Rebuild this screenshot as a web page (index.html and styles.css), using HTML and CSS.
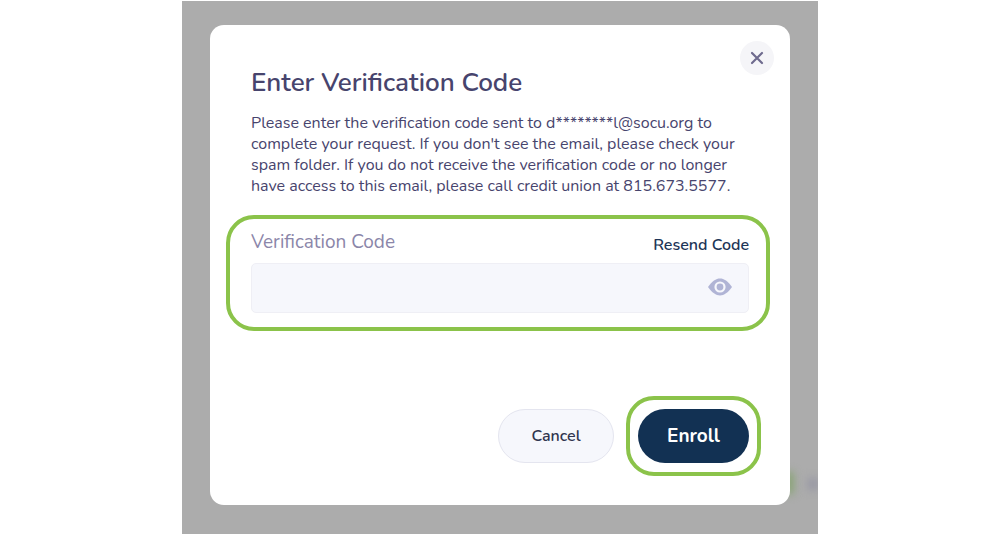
FILE: index.html
```html
<!DOCTYPE html>
<html lang="en">
  <head>
    <meta charset="UTF-8" />
    <meta name="viewport" content="width=device-width, initial-scale=1.0" />
    <title>Enter Verification Code</title>
    <link rel="stylesheet" href="styles.css">
  </head>
  <body>
    <div class="backdrop">
      <span class="blob blob-green"></span>
      <span class="blob blob-gray"></span>

      <div class="modal" role="dialog" aria-labelledby="title">
        <button class="close" type="button" aria-label="Close">
          <svg width="14" height="14" viewBox="0 0 14 14">
            <path d="M2 2L12 12M12 2L2 12" fill="none" stroke="#6f6b8e" stroke-width="2.2" stroke-linecap="round" />
          </svg>
        </button>

        <h1 id="title">Enter Verification Code</h1>
        <p class="message">
          Please enter the verification code sent to d********l@socu.org to<br />
          complete your request. If you don't see the email, please check your<br />
          spam folder. If you do not receive the verification code or no longer<br />
          have access to this email, please call credit union at 815.673.5577.
        </p>

        <form>
          <div class="highlight code-group">
            <div class="code-header">
              <label for="code">Verification Code</label>
              <a class="resend" href="#">Resend Code</a>
            </div>
            <div class="code-field">
              <input type="password" id="code" name="code" />
              <button class="show-code" type="button" aria-label="Show code">
                <svg width="26" height="18" viewBox="0 0 26 18">
                  <path d="M1 9C5 3.2 9 0.6 13 0.6S21 3.2 25 9C21 14.8 17 17.4 13 17.4S5 14.8 1 9Z" fill="#b0b4d5" />
                  <circle cx="13" cy="9" r="4.5" fill="#b0b4d5" stroke="#f6f7fc" stroke-width="2.2" />
                </svg>
              </button>
            </div>
          </div>

          <div class="actions">
            <button class="btn cancel" type="button">Cancel</button>
            <div class="highlight enroll-group">
              <button class="btn enroll" type="submit">Enroll</button>
            </div>
          </div>
        </form>
      </div>
    </div>
  </body>
</html>
```
FILE: styles.css
```css
* {
  box-sizing: border-box;
}
body {
  font-family: Nunito, Lato, sans-serif;
  background-color: #fff;
  color: #47446d;
  margin: 0;
}
.backdrop {
  position: relative;
  overflow: hidden;
  max-width: 636px;
  margin: 1px auto;
  padding: 24px 28px 29px;
  background-color: #acacac;
}
.modal {
  position: relative;
  padding: 42px 41px 41px;
  background-color: #fff;
  border-radius: 14px;
}
h1 {
  margin: 0 0 14px;
  font-size: 26px;
  line-height: 32px;
  font-weight: 600;
}
.message {
  margin: 0 -10px 18px 0;
  font-size: 16px;
  line-height: 21px;
}
.close {
  position: absolute;
  top: 16px;
  right: 16px;
  width: 34px;
  height: 34px;
  display: flex;
  align-items: center;
  justify-content: center;
  padding: 0;
  border: none;
  border-radius: 50%;
  background-color: #f5f5f8;
}

/* green outlines */
.highlight {
  border: 4px solid #8bc34a;
  border-radius: 28px;
}
.code-group {
  margin: 0 -21px 0 -25px;
  padding: 10px 17px 14px 21px;
}
.code-header {
  display: flex;
  justify-content: space-between;
  align-items: flex-end;
  margin-bottom: 8px;
}
label {
  color: #8b86a9;
  font-size: 19px;
  line-height: 26px;
}
.resend {
  color: #1d3557;
  font-size: 16px;
  line-height: 20px;
  font-weight: 600;
  text-decoration: none;
}
.code-field {
  position: relative;
}
.code-field input {
  display: block;
  width: 100%;
  height: 50px;
  padding: 0 56px 0 16px;
  border: 1px solid #efeff5;
  border-radius: 5px;
  background-color: #f6f7fc;
  font: inherit;
}
.show-code {
  position: absolute;
  top: 15px;
  right: 16px;
  display: flex;
  padding: 0;
  border: none;
  background: none;
}

.actions {
  display: flex;
  justify-content: flex-end;
  align-items: center;
  gap: 12px;
  margin: 65px -12px -12px 0;
}
.btn {
  height: 54px;
  border: none;
  border-radius: 27px;
  font-family: inherit;
  font-weight: 600;
}
.cancel {
  width: 116px;
  border: 1px solid #e4e5ef;
  background-color: #f6f7fc;
  color: #30354f;
  font-size: 16px;
}
.enroll-group {
  padding: 9px 8px;
}
.enroll {
  display: block;
  width: 111px;
  background-color: #123153;
  color: #fff;
  font-size: 19px;
  font-weight: 700;
}

/* page content showing through behind the modal */
.blob {
  position: absolute;
  filter: blur(4px);
}
.blob-green {
  right: 25px;
  bottom: 40px;
  width: 7px;
  height: 22px;
  background-color: #7fa266;
}
.blob-gray {
  right: 0;
  bottom: 44px;
  width: 10px;
  height: 12px;
  background-color: #9696a4;
}
```
